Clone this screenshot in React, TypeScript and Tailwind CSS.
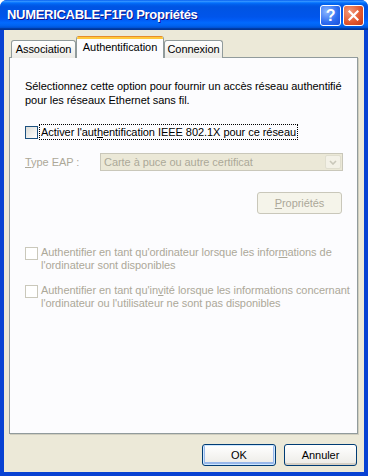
import React from 'react';

const font = { fontFamily: '"Liberation Sans", Arial, sans-serif' };

function XpCheck({ disabled }: { disabled?: boolean }) {
  return (
    <span
      className={`block w-[13px] h-[13px] shrink-0 border ${
        disabled
          ? 'border-[#CAC8BB] bg-white'
          : 'border-[#1C5180] bg-gradient-to-br from-[#DCDCD7] to-white'
      }`}
    />
  );
}

function TitleButton({ kind }: { kind: 'help' | 'close' }) {
  const bg =
    kind === 'help'
      ? 'bg-[radial-gradient(circle_at_30%_30%,#8AB6FF,#2D6BF0_60%,#1A4FD8)]'
      : 'bg-[radial-gradient(circle_at_30%_30%,#F29A7C,#E2562C_60%,#C0391B)]';
  return (
    <div className={`w-[21px] h-[21px] rounded-[3px] border border-white flex items-center justify-center ${bg}`}>
      {kind === 'help' ? (
        <span className="text-white text-[16px] font-bold leading-none" style={font}>?</span>
      ) : (
        <svg width="11" height="11" viewBox="0 0 11 11">
          <path d="M1.5 1.5 L9.5 9.5 M9.5 1.5 L1.5 9.5" stroke="white" strokeWidth="2.2" strokeLinecap="square" />
        </svg>
      )}
    </div>
  );
}

export default function App() {
  return (
    <div
      className="w-[368px] h-[476px] flex flex-col rounded-t-[7px] overflow-hidden bg-[#0842D3] text-[11px] tracking-[-0.05px] whitespace-nowrap text-black"
      style={font}
    >
      {/* Title bar */}
      <div className="h-[30px] shrink-0 flex items-center pl-[7px] pr-[4px] bg-[linear-gradient(to_bottom,#0058EE_0%,#3593FF_4%,#288EFF_6%,#127DFF_8%,#036FFC_10%,#0262EE_14%,#0057E5_20%,#0054E3_24%,#0055EB_56%,#005BF5_66%,#026AFE_76%,#0062EF_86%,#0052D6_92%,#0040AB_94%,#003092_100%)]">
        <span className="flex-1 text-white font-bold text-[13px] tracking-[-0.3px] [text-shadow:1px_1px_#0F1089]">
          NUMERICABLE-F1F0 Propriétés
        </span>
        <div className="flex gap-[2px] mt-[1px]">
          <TitleButton kind="help" />
          <TitleButton kind="close" />
        </div>
      </div>

      {/* Body */}
      <div className="flex-1 mx-[4px] mb-[4px] bg-[#ECE9D8] flex flex-col pl-[5px] pr-[6px] pt-[6px]">
        {/* Tabs */}
        <div className="flex items-end h-[21px] pl-[2px] relative z-10">
          <div className="h-[18px] w-[65px] flex items-center justify-center border border-b-0 border-[#919B9C] rounded-t-[3px] bg-gradient-to-b from-white to-[#ECEBE6] mb-[-1px]">
            Association
          </div>
          <div className="h-[22px] w-[88px] flex flex-col border-x border-[#919B9C] rounded-t-[3px] bg-[#FCFCFE] overflow-hidden mb-[-1px] pb-[1px]">
            <div className="h-[3px] bg-[#FFC83C] border-t border-[#E68B2C]" />
            <div className="flex-1 flex items-center justify-center pb-[2px]">Authentification</div>
          </div>
          <div className="h-[18px] w-[59px] flex items-center justify-center border border-b-0 border-[#919B9C] rounded-t-[3px] bg-gradient-to-b from-white to-[#ECEBE6] mb-[-1px]">
            Connexion
          </div>
        </div>

        {/* Panel */}
        <div className="h-[377px] border border-[#919B9C] bg-[#FCFCFE] shadow-[1px_1px_0_#D0CEBF] pl-[15px] pr-[14px] pt-[21px]">
          <p className="leading-[14px]">
            Sélectionnez cette option pour fournir un accès réseau authentifié
            <br />
            pour les réseaux Ethernet sans fil.
          </p>

          <div className="flex items-center mt-[17px] h-[16px]">
            <XpCheck />
            <span className="ml-[1px] px-[1px] border border-dotted border-black leading-[14px]">
              Activer l'aut<span className="underline">h</span>entification IEEE 802.1X pour ce réseau
            </span>
          </div>

          <div className="flex items-center mt-[13px] text-[#ACA899]">
            <span className="w-[75px]">
              <span className="underline">T</span>ype EAP :
            </span>
            <div className="w-[243px] h-[18px] border border-[#C9C7BA] bg-[#EBE8D7] flex items-center">
              <span className="flex-1 pl-[3px]">Carte à puce ou autre certificat</span>
              <div className="w-[16px] h-[14px] mr-[1px] rounded-[2px] bg-[#F3F1E7] border border-[#E0DECF] flex items-center justify-center">
                <svg width="8" height="5" viewBox="0 0 8 5">
                  <path d="M1 1 L4 4 L7 1" stroke="#C9C7BA" strokeWidth="1.6" fill="none" />
                </svg>
              </div>
            </div>
          </div>

          <div className="flex justify-end mt-[21px] pr-[1px]">
            <div className="w-[85px] h-[22px] rounded-[3px] border border-[#C9C7BA] bg-[#F5F4EA] text-[#ACA899] flex items-center justify-center">
              <span><span className="underline">P</span>ropriétés</span>
            </div>
          </div>

          <div className="flex items-start mt-[32px] text-[#ACA899]">
            <div className="mt-[1px]"><XpCheck disabled /></div>
            <p className="ml-[3px] leading-[13px]">
              Authentifier en tant qu'ordinateur lorsque les infor<span className="underline">m</span>ations de
              <br />
              l'ordinateur sont disponibles
            </p>
          </div>

          <div className="flex items-start mt-[12px] text-[#ACA899]">
            <div className="mt-[1px]"><XpCheck disabled /></div>
            <p className="ml-[3px] leading-[13px]">
              Authentifier en tant qu'in<span className="underline">v</span>ité lorsque les informations concernant
              <br />
              l'ordinateur ou l'utilisateur ne sont pas disponibles
            </p>
          </div>
        </div>

        {/* Buttons */}
        <div className="flex justify-end gap-[8px] mt-[10px] pr-[1px]">
          <div className="w-[74px] h-[22px] rounded-[3px] border border-[#003C74] bg-gradient-to-b from-white to-[#ECEBE6] shadow-[inset_0_0_0_1px_#CEE7FF,inset_0_-1px_0_2px_#98B8EA] flex items-center justify-center">
            OK
          </div>
          <div className="w-[73px] h-[22px] rounded-[3px] border border-[#003C74] bg-gradient-to-b from-white to-[#ECEBE6] shadow-[inset_0_-2px_0_#D6D0C5] flex items-center justify-center">
            Annuler
          </div>
        </div>
      </div>
    </div>
  );
}
